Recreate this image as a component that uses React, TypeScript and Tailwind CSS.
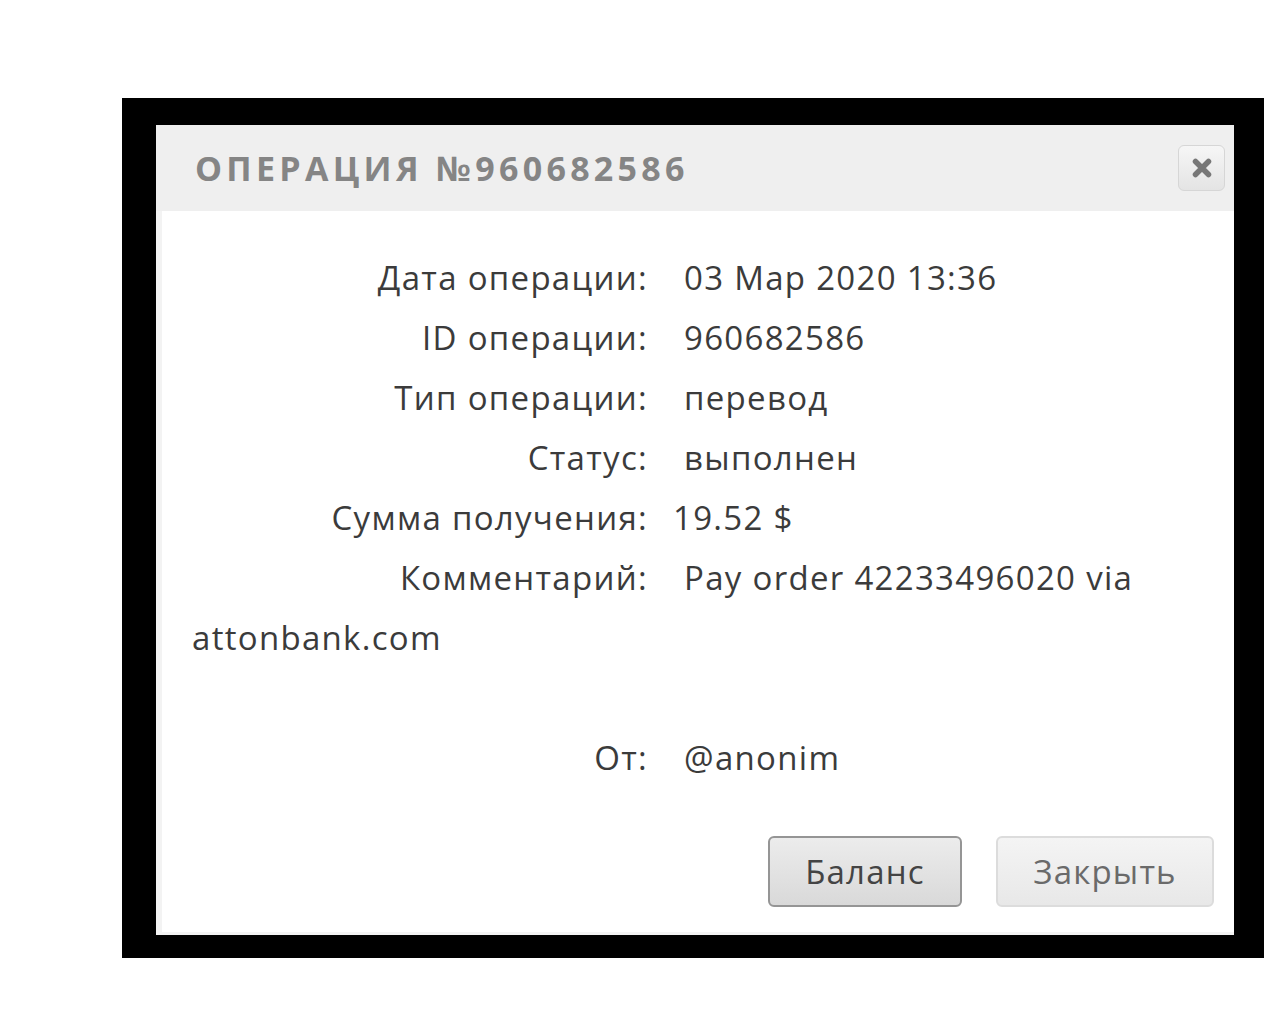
export default function App() {
  const rows = [
    { label: "Дата операции:", value: "03 Мар 2020 13:36" },
    { label: "ID операции:", value: "960682586" },
    { label: "Тип операции:", value: "перевод" },
    { label: "Статус:", value: "выполнен" },
  ];

  return (
    <div
      className="w-[1280px] h-[1024px] bg-white pt-[98px] pl-[122px]"
      style={{ fontFamily: '"Open Sans", "Noto Sans", sans-serif' }}
    >
      <div className="w-[1142px] h-[860px] bg-black pt-[27px] pl-[34px]">
        <div className="w-[1078px] h-[810px] bg-white flex flex-col">
          {/* Header */}
          <div className="h-[86px] shrink-0 bg-[#efefef] flex items-center justify-between pl-[39px] pr-[9px]">
            <h2 className="text-[34px] font-bold tracking-[4.3px] text-[#858585] uppercase leading-none">
              Операция №960682586
            </h2>
            <button className="w-[47px] h-[46px] rounded-md border border-[#d6d6d6] bg-gradient-to-b from-[#f6f6f6] to-[#e4e4e4] flex items-center justify-center">
              <svg width="24" height="24" viewBox="0 0 24 24">
                <path
                  d="M5.5 5.5 L18.5 18.5 M18.5 5.5 L5.5 18.5"
                  stroke="#777"
                  strokeWidth="5.5"
                  strokeLinecap="round"
                />
              </svg>
            </button>
          </div>

          {/* Body */}
          <div className="flex-1 flex flex-col border-l-[6px] border-b-[3px] border-[#f3f3f3]">
            <div className="pl-[30px] pt-[37px] text-[33px] tracking-[1.3px] leading-[60px] text-[#3b3b3b]">
              {rows.map((r) => (
                <div key={r.label}>
                  <span className="inline-block w-[456px] text-right">{r.label}</span>
                  <span className="ml-[36px]">{r.value}</span>
                </div>
              ))}
              <div>
                <span className="inline-block w-[456px] text-right">Сумма получения:</span>
                <span className="ml-[25px]">19.52 $</span>
              </div>
              <div>
                <span className="inline-block w-[456px] text-right">Комментарий:</span>
                <span className="ml-[36px]">Pay order 42233496020 via</span>
                <br />
                attonbank.com
              </div>
              <div className="h-[60px]" />
              <div>
                <span className="inline-block w-[456px] text-right">От:</span>
                <span className="ml-[36px]">@anonim</span>
              </div>
            </div>

            <div className="flex justify-end gap-[34px] pr-[20px] mt-[48px]">
              <button className="w-[194px] h-[71px] rounded-md border-2 border-[#959595] bg-gradient-to-b from-[#ececec] to-[#d9d9d9] text-[33px] tracking-[1.2px] text-[#444]">
                Баланс
              </button>
              <button className="w-[218px] h-[71px] rounded-md border-2 border-[#dcdcdc] bg-gradient-to-b from-[#f4f4f4] to-[#e8e8e8] text-[33px] tracking-[1.2px] text-[#6a6a6a]">
                Закрыть
              </button>
            </div>
          </div>
        </div>
      </div>
    </div>
  );
}
